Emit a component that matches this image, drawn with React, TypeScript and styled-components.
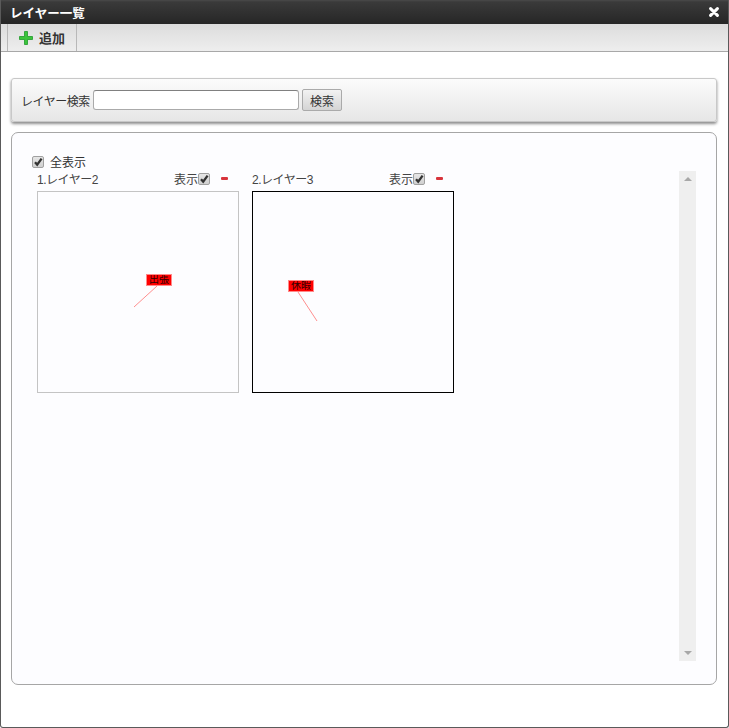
import React from "react";
import styled, { createGlobalStyle } from "styled-components";

const GlobalStyle = createGlobalStyle`
  html, body {
    margin: 0;
    padding: 0;
    background: #fff;
    font-family: "Liberation Sans", "Noto Sans CJK JP", sans-serif;
    font-size: 12px;
    color: #333;
  }
`;

const Dialog = styled.div`
  width: 729px;
  height: 728px;
  box-sizing: border-box;
  display: flex;
  flex-direction: column;
  background: #fff;
  border: 1px solid #5a5a5a;
  border-top: none;
  border-radius: 0 0 3px 3px;
`;

const TitleBar = styled.div`
  height: 24px;
  flex: none;
  box-sizing: border-box;
  display: flex;
  align-items: center;
  justify-content: space-between;
  padding: 0 9px 0 9px;
  background: linear-gradient(#4a4a4a 0, #3a3a3a 2px, #262626 100%);
  color: #fff;
  font-size: 12.5px;
  font-weight: bold;
`;

const Toolbar = styled.div`
  height: 28px;
  flex: none;
  box-sizing: border-box;
  display: flex;
  padding-left: 6px;
  background: linear-gradient(#dcdcdc, #eeeeee);
  border-bottom: 1px solid #a8a8a8;
`;

const ToolButton = styled.div`
  display: flex;
  align-items: center;
  gap: 6px;
  padding: 0 11px;
  border-left: 1px solid #b8b8b8;
  border-right: 1px solid #b8b8b8;
  font-size: 13px;
  font-weight: bold;
  color: #333;
`;

const Content = styled.div`
  flex: 1;
  display: flex;
  flex-direction: column;
  gap: 10px;
  padding: 26px 11px 42px 10px;
  min-height: 0;
`;

const SearchPanel = styled.div`
  height: 44px;
  flex: none;
  box-sizing: border-box;
  display: flex;
  align-items: center;
  padding: 0 9px;
  border: 1px solid #c8c8c8;
  border-radius: 3px;
  background: linear-gradient(#fbfbfb, #e6e6e6);
  box-shadow: 0 2px 3px rgba(0, 0, 0, 0.45);
`;

const SearchLabel = styled.span`
  width: 72px;
  letter-spacing: -0.5px;
`;

const SearchInput = styled.input`
  width: 206px;
  height: 20px;
  box-sizing: border-box;
  margin: 0;
  padding: 0 4px;
  border: 1px solid #aaa;
  border-top-color: #808080;
  border-radius: 3px;
  background: #fff;
`;

const SearchButton = styled.button`
  width: 40px;
  height: 22px;
  margin: 0 0 0 3px;
  padding: 0;
  border: 1px solid #aaa;
  border-radius: 2px;
  background: linear-gradient(#f2f2f2, #d4d4d4);
  font: inherit;
  color: #333;
`;

const LayerPanel = styled.div`
  flex: 1;
  box-sizing: border-box;
  position: relative;
  display: flex;
  justify-content: space-between;
  padding: 21px 20px 23px 25px;
  border: 1px solid #a6a6a6;
  border-radius: 7px;
  background: #fdfdff;
`;

const LayerArea = styled.div`
  display: flex;
  flex-direction: column;
`;

const ShowAll = styled.label`
  height: 17px;
  display: flex;
  align-items: center;
  gap: 6px;
  margin: -1px 0 0 -5px;
  font-size: 12px;
`;

const LayerList = styled.div`
  display: flex;
  gap: 13px;
`;

const LayerCard = styled.div`
  width: 202px;
  display: flex;
  flex-direction: column;
`;

const LayerHeader = styled.div`
  height: 21px;
  display: flex;
  align-items: center;
  justify-content: space-between;
  padding: 0 11px 4px 0;
  box-sizing: border-box;
  color: #444;
`;

const LayerName = styled.span`
  letter-spacing: -0.5px;
`;

const ShowToggle = styled.div`
  display: flex;
  align-items: center;
`;

const CheckBox = styled.span`
  width: 10px;
  height: 10px;
  flex: none;
  display: inline-flex;
  align-items: center;
  justify-content: center;
  border: 1px solid #a0a0a0;
  border-radius: 2px;
  background: linear-gradient(#e6e6e6, #d0d0d0);
`;

const Minus = styled.span`
  width: 7px;
  height: 3px;
  margin-left: 11px;
  border-radius: 1px;
  background: #d8343c;
`;

const Canvas = styled.div<{ $selected: boolean }>`
  width: 202px;
  height: 202px;
  box-sizing: border-box;
  position: relative;
  border: 1px solid ${({ $selected }) => ($selected ? "#000" : "#c4c4c4")};
`;

const Pin = styled.span<{ $x: number; $y: number; $w: number }>`
  position: absolute;
  left: ${({ $x }) => $x}px;
  top: ${({ $y }) => $y}px;
  width: ${({ $w }) => $w}px;
  height: 10px;
  line-height: 10px;
  font-size: 10px;
  text-align: center;
  background: #ff0000;
  color: #300;
  outline: 1px solid #ff8a8a;
`;

const PinLine = styled.svg`
  position: absolute;
  left: 0;
  top: 0;
  width: 200px;
  height: 200px;
`;

const ScrollTrack = styled.div`
  width: 17px;
  flex: none;
  margin-top: 17px;
  display: flex;
  flex-direction: column;
  justify-content: space-between;
  align-items: center;
  padding: 6px 0;
  box-sizing: border-box;
  background: #efefef;
`;

const Arrow = styled.span<{ $up?: boolean }>`
  width: 0;
  height: 0;
  border-left: 4px solid transparent;
  border-right: 4px solid transparent;
  ${({ $up }) =>
    $up ? "border-bottom: 4px solid #a8a8a8;" : "border-top: 4px solid #a8a8a8;"}
`;

const layers = [
  { name: "1.レイヤー2", selected: false, pin: { x: 109, y: 83, w: 24, label: "出張" }, line: "119,94 96,115" },
  { name: "2.レイヤー3", selected: true, pin: { x: 36, y: 89, w: 24, label: "休暇" }, line: "45,100 64,129" },
];

const Tick = () => (
  <svg width="10" height="10" viewBox="0 0 10 10">
    <path d="M2 5.2 L4.2 7.6 L8.6 1.6" fill="none" stroke="#333" strokeWidth="2.3" />
  </svg>
);

export default function App() {
  return (
    <Dialog>
      <GlobalStyle />
      <TitleBar>
        <span>レイヤー一覧</span>
        <svg width="10" height="10" viewBox="0 0 10 10">
          <path d="M1.6 1.6 L8.4 8.4 M8.4 1.6 L1.6 8.4" stroke="#fff" strokeWidth="3" strokeLinecap="round" />
        </svg>
      </TitleBar>
      <Toolbar>
        <ToolButton>
          <svg width="14" height="14" viewBox="0 0 14 14">
            <path d="M5.5 0.5h3v5h5v3h-5v5h-3v-5h-5v-3h5z" fill="#3cc43c" stroke="#1f9a2a" strokeWidth="0.8" />
          </svg>
          追加
        </ToolButton>
      </Toolbar>
      <Content>
        <SearchPanel>
          <SearchLabel>レイヤー検索</SearchLabel>
          <SearchInput />
          <SearchButton>検索</SearchButton>
        </SearchPanel>
        <LayerPanel>
          <LayerArea>
            <ShowAll>
              <CheckBox>
                <Tick />
              </CheckBox>
              全表示
            </ShowAll>
            <LayerList>
              {layers.map((layer) => (
                <LayerCard key={layer.name}>
                  <LayerHeader>
                    <LayerName>{layer.name}</LayerName>
                    <ShowToggle>
                      表示
                      <CheckBox>
                        <Tick />
                      </CheckBox>
                      <Minus />
                    </ShowToggle>
                  </LayerHeader>
                  <Canvas $selected={layer.selected}>
                    <PinLine viewBox="0 0 200 200">
                      <polyline points={layer.line} fill="none" stroke="#ff8f8f" strokeWidth="1" />
                    </PinLine>
                    <Pin $x={layer.pin.x} $y={layer.pin.y} $w={layer.pin.w}>
                      {layer.pin.label}
                    </Pin>
                  </Canvas>
                </LayerCard>
              ))}
            </LayerList>
          </LayerArea>
          <ScrollTrack>
            <Arrow $up />
            <Arrow />
          </ScrollTrack>
        </LayerPanel>
      </Content>
    </Dialog>
  );
}
